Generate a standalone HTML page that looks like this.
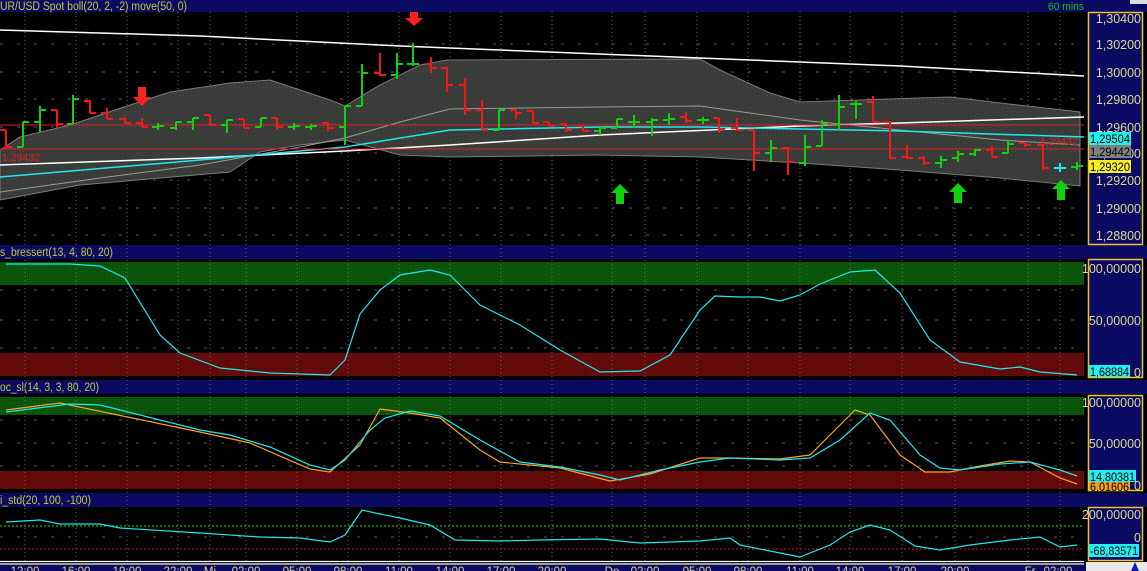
<!DOCTYPE html>
<html><head><meta charset="utf-8"><style>
html,body{margin:0;padding:0;background:#000;width:1147px;height:571px;overflow:hidden}
svg{display:block}
text{font-family:"Liberation Sans",sans-serif}
</style></head><body>
<svg width="1147" height="571" xmlns="http://www.w3.org/2000/svg">
<defs>
<pattern id="gp" width="4" height="4" patternUnits="userSpaceOnUse"><rect width="4" height="4" fill="#3a3a3a"/><rect x="1" y="1" width="1" height="1" fill="#2e4a2e"/><rect x="3" y="3" width="1" height="1" fill="#4a4a4a"/></pattern>
<pattern id="grn" width="2" height="2" patternUnits="userSpaceOnUse"><rect width="2" height="2" fill="#0c5a0c"/><rect width="1" height="1" fill="#064406"/></pattern>
<pattern id="red" width="2" height="2" patternUnits="userSpaceOnUse"><rect width="2" height="2" fill="#6a0c0c"/><rect width="1" height="1" fill="#500606"/></pattern>
<pattern id="nv" width="2" height="2" patternUnits="userSpaceOnUse"><rect width="2" height="2" fill="#08085e"/><rect width="1" height="1" fill="#101070"/></pattern>
<clipPath id="c1"><rect x="0" y="12" width="1084" height="233"/></clipPath>
</defs>
<rect width="1147" height="571" fill="#000"/>
<rect x="0" y="0" width="1147" height="12" fill="url(#nv)"/>
<rect x="0" y="245" width="1147" height="14" fill="url(#nv)"/>
<rect x="0" y="380" width="1147" height="14" fill="url(#nv)"/>
<rect x="0" y="493" width="1147" height="14" fill="url(#nv)"/>
<text x="0" y="10" font-size="11.5" fill="#c8c838" textLength="187" lengthAdjust="spacingAndGlyphs">UR/USD Spot boll(20, 2, -2) move(50, 0)</text>
<text x="1048" y="10" font-size="11" fill="#18c018" textLength="36" lengthAdjust="spacingAndGlyphs">60 mins</text>
<rect x="1130" y="0" width="17" height="4" fill="#ddd"/>
<text x="0" y="256" font-size="11.5" fill="#c8c838" textLength="113" lengthAdjust="spacingAndGlyphs">s_bressert(13, 4, 80, 20)</text>
<text x="0" y="391" font-size="11.5" fill="#c8c838" textLength="99" lengthAdjust="spacingAndGlyphs">oc_sl(14, 3, 3, 80, 20)</text>
<text x="0" y="504" font-size="11.5" fill="#c8c838" textLength="91" lengthAdjust="spacingAndGlyphs">i_std(20, 100, -100)</text>

<rect x="0" y="262" width="1084" height="23" fill="url(#grn)"/>
<rect x="0" y="353" width="1084" height="23" fill="url(#red)"/>
<rect x="0" y="397" width="1084" height="18" fill="url(#grn)"/>
<rect x="0" y="471" width="1084" height="18" fill="url(#red)"/>

<g stroke="#6a6a6a" stroke-width="1" stroke-dasharray="1,3">
<path d="M25 12V562M76 12V562M127 12V562M178 12V562M210 12V562M246 12V562M297 12V562M348 12V562M399 12V562M450 12V562M501 12V562M552 12V562M612 12V562M645 12V562M697 12V562M748 12V562M800 12V562M850 12V562M902 12V562M955 12V562M1028 12V562M1060 12V562"/>
</g>
<g stroke="#5a5a5a" stroke-width="1" stroke-dasharray="3,14">
<path d="M0 44H1084M0 72H1084M0 99H1084M0 127H1084M0 153H1084M0 180H1084M0 208H1084M0 235H1084M0 290H1084M0 320H1084M0 348H1084M0 420H1084M0 443H1084M0 466H1084M0 537H1084"/>
</g>
<path d="M0 526H1084" stroke="#20e020" stroke-dasharray="2,2"/>
<path d="M0 549H1084" stroke="#c02020" stroke-dasharray="2,2"/>

<g clip-path="url(#c1)">
<path d="M0 150L20 137L70 125L130 105L170 92L230 83L270 80L330 100L345 106L380 85L420 65L447 60L700 59L720 70L770 93L800 102L950 97L1000 103L1080 112L1080 186L1000 178L900 170L800 163L700 157L600 155L450 157L400 155L345 140L300 145L260 152L230 172L80 185L0 200Z" fill="url(#gp)" stroke="#7a7a7a" stroke-width="1"/>
<polyline points="0,192 100,178 200,165 300,147 345,138 400,122 450,109 600,107 700,106 800,120 900,130 1000,140 1080,145" fill="none" stroke="#9a9a9a" stroke-width="1"/>
<polyline points="0,30 200,36 400,46 650,56 900,66 1084,76" fill="none" stroke="#fff" stroke-width="1.5"/>
<polyline points="0,165 200,158 345,151 450,145 600,135 800,126 900,123 1084,117" fill="none" stroke="#fff" stroke-width="1.5"/>
<polyline points="0,177 200,160 345,147 450,130 600,127 700,127 900,131 1084,137" fill="none" stroke="#20e8f0" stroke-width="1.5"/>
<path d="M0 125H1084M0 149H1084" stroke="#e02020" stroke-width="1"/>
<g id="bars" stroke-width="2" fill="none"></g>
<path d="M138 87h8v10h5l-9 9l-9-9h5z" fill="#ff2020"/>
<path d="M410 12h8v6h5l-9 8l-9-8h5z" fill="#ff2020"/>
<path d="M616 204h8v-11h5l-9-9l-9 9h5z" fill="#10d010"/>
<path d="M954 203h8v-11h5l-9-9l-9 9h5z" fill="#10d010"/>
<path d="M1057 200h8v-11h5l-9-9l-9 9h5z" fill="#10d010"/>
</g>
<text x="2" y="161" font-size="11" fill="#e02020" textLength="38" lengthAdjust="spacingAndGlyphs">1,29432</text>
<text x="1040" y="145" font-size="11" fill="#e02020" textLength="38" lengthAdjust="spacingAndGlyphs">1,29432</text>

<polyline fill="none" stroke="#20e8f0" stroke-width="1.2" points="6,264 70,264 100,266 125,278 160,335 180,353 220,368 270,373 330,375 345,360 360,314 380,290 400,275 430,270 450,275 480,305 520,325 560,350 600,372 640,371 670,355 700,310 715,296 740,297 760,297 780,301 800,295 820,284 850,272 875,270 900,293 930,340 960,362 1000,369 1020,367 1040,372 1077,375"/>
<polyline fill="none" stroke="#ffa020" stroke-width="1.2" points="6,410 60,403 200,432 250,443 310,469 330,472 360,445 380,409 410,413 440,418 480,450 500,462 560,468 610,481 650,474 700,458 730,458 780,459 810,455 855,410 870,415 900,455 925,472 950,472 980,466 1010,461 1030,462 1060,478 1077,484"/>
<polyline fill="none" stroke="#20e8f0" stroke-width="1.2" points="6,412 70,404 100,405 200,430 230,435 270,447 310,465 330,470 345,460 370,430 385,418 410,411 440,416 480,440 520,462 560,467 600,475 620,480 660,470 700,462 730,458 780,460 810,458 840,440 870,413 890,420 920,455 940,468 960,470 1000,464 1030,462 1060,470 1077,476"/>
<polyline fill="none" stroke="#20e8f0" stroke-width="1.2" points="6,522 40,520 60,524 100,524 120,528 200,533 260,537 300,538 330,542 345,535 362,510 380,514 400,518 430,525 455,540 500,541 540,540 600,539 640,543 700,541 730,538 740,545 770,551 800,557 830,545 850,532 870,525 890,530 915,546 940,550 970,545 1010,540 1040,537 1060,547 1077,545"/>

<g fill="url(#nv)" stroke="#f0c030" stroke-width="1.5">
<rect x="1088.5" y="12.5" width="54" height="232"/>
<rect x="1088.5" y="259.5" width="54" height="118"/>
<rect x="1088.5" y="395.5" width="54" height="95"/>
<rect x="1088.5" y="507.5" width="54" height="53"/>
</g>
<g font-size="12.5" fill="#e0d890" text-anchor="end">
<text x="1141" y="23">1,30400</text><text x="1141" y="49">1,30200</text><text x="1141" y="77">1,30000</text><text x="1141" y="104">1,29800</text><text x="1141" y="132">1,29600</text><text x="1141" y="158">1,29400</text><text x="1141" y="185">1,29200</text><text x="1141" y="213">1,29000</text><text x="1141" y="240">1,28800</text>
<text x="1141" y="273">100,00000</text><text x="1141" y="325">50,00000</text><text x="1141" y="377">0</text>
<text x="1141" y="407">100,00000</text><text x="1141" y="448">50,00000</text><text x="1141" y="490">0</text>
<text x="1141" y="519">200,00000</text><text x="1141" y="542">0</text>
</g>
<g font-size="12" fill="#000" lengthAdjust="spacingAndGlyphs">
<rect x="1089" y="132" width="42" height="13" fill="#20f0f0"/><text x="1090" y="143" textLength="40" lengthAdjust="spacingAndGlyphs">1,29504</text>
<rect x="1089" y="145" width="42" height="13" fill="#808080"/><text x="1090" y="156" textLength="40" lengthAdjust="spacingAndGlyphs">1,29442</text>
<rect x="1089" y="160" width="42" height="13" fill="#f8f020"/><text x="1090" y="171" textLength="40" lengthAdjust="spacingAndGlyphs">1,29320</text>
<rect x="1089" y="365" width="41" height="12" fill="#20f0f0"/><text x="1090" y="376" textLength="39" lengthAdjust="spacingAndGlyphs">1,68884</text>
<rect x="1089" y="470" width="47" height="12" fill="#20f0f0"/><text x="1090" y="481" textLength="45" lengthAdjust="spacingAndGlyphs">14,80381</text>
<rect x="1089" y="482" width="41" height="8" fill="#f0a020"/><text x="1090" y="491" textLength="39" lengthAdjust="spacingAndGlyphs">6,01606</text>
<rect x="1089" y="544" width="50" height="13" fill="#20f0f0"/><text x="1090" y="555" textLength="48" lengthAdjust="spacingAndGlyphs">-68,83571</text>
</g>

<path d="M0 561.5H1084M0 564H1084" stroke="#fff" stroke-width="1.2"/>
<rect x="0" y="565" width="1086" height="6" fill="url(#nv)"/>
<rect x="1086" y="562" width="61" height="9" fill="#e8e8e8"/>
<path d="M1131 571l4-9l4 9z" fill="#1020c0"/>
<g font-size="11.5" fill="#e0d890" text-anchor="middle">
<text x="25" y="575">12:00</text><text x="76" y="575">16:00</text><text x="127" y="575">19:00</text><text x="178" y="575">22:00</text><text x="210" y="575">Mi</text><text x="246" y="575">02:00</text><text x="297" y="575">05:00</text><text x="348" y="575">08:00</text><text x="399" y="575">11:00</text><text x="450" y="575">14:00</text><text x="501" y="575">17:00</text><text x="552" y="575">20:00</text><text x="612" y="575">Do</text><text x="645" y="575">02:00</text><text x="697" y="575">05:00</text><text x="748" y="575">08:00</text><text x="800" y="575">11:00</text><text x="850" y="575">14:00</text><text x="902" y="575">17:00</text><text x="955" y="575">20:00</text><text x="1030" y="575">Fr</text><text x="1058" y="575">02:00</text>
</g>
</svg>
<script>
var B=[[6,130,147,130,148],[23,147,122,122,147],[40,122,110,106,132],[57,110,124,110,128],[73,124,99,95,124],[90,101,113,100,113],[107,113,119,108,119],[125,119,123,117,123],[142,123,127,118,127],[158,127,126,123,130],[176,128,122,122,130],[193,122,118,118,130],[210,115,125,115,125],[227,125,120,120,133],[244,119,128,119,128],[261,127,118,118,127],[277,118,127,118,130],[294,127,126,123,130],[311,127,126,124,130],[328,123,128,123,131],[345,127,106,106,145],[362,106,73,64,106],[380,73,75,53,76],[397,75,64,53,79],[413,64,64,43,66],[431,64,68,57,73],[447,68,85,68,92],[465,85,110,78,115],[482,110,130,100,130],[499,130,110,110,130],[516,110,113,110,119],[533,111,123,111,123],[549,122,126,122,126],[566,124,130,124,132],[583,126,131,126,131],[600,131,128,128,135],[617,128,119,119,128],[634,122,122,115,128],[652,122,120,118,136],[669,120,119,113,125],[686,117,121,112,123],[703,120,120,117,124],[719,118,129,118,133],[737,128,130,118,130],[754,130,153,130,171],[771,153,148,140,162],[788,148,162,147,175],[805,163,147,135,166],[822,146,124,120,146],[839,124,107,95,130],[856,104,104,101,119],[873,102,122,96,122],[890,122,158,121,159],[907,157,158,145,158],[924,158,163,156,165],[941,163,160,156,168],[958,158,154,151,162],[975,154,150,149,156],[992,150,157,146,157],[1008,153,144,140,153],[1025,143,145,143,147],[1043,145,168,140,170],[1060,168,168,163,172],[1077,167,166,162,170]];
var g=document.getElementById('bars'),ns='http://www.w3.org/2000/svg';
B.forEach(function(b,i){var x=b[0],c=b[2]<b[1]?'#10d010':(b[2]>b[1]?'#f01818':'#10d010');if(i==62)c='#20e8f0';
var p=document.createElementNS(ns,'path');p.setAttribute('d','M'+x+' '+b[3]+'V'+b[4]+'M'+(x-6)+' '+b[1]+'H'+x+'M'+x+' '+b[2]+'H'+(x+6));p.setAttribute('stroke',c);g.appendChild(p);});
</script>
</body></html>
